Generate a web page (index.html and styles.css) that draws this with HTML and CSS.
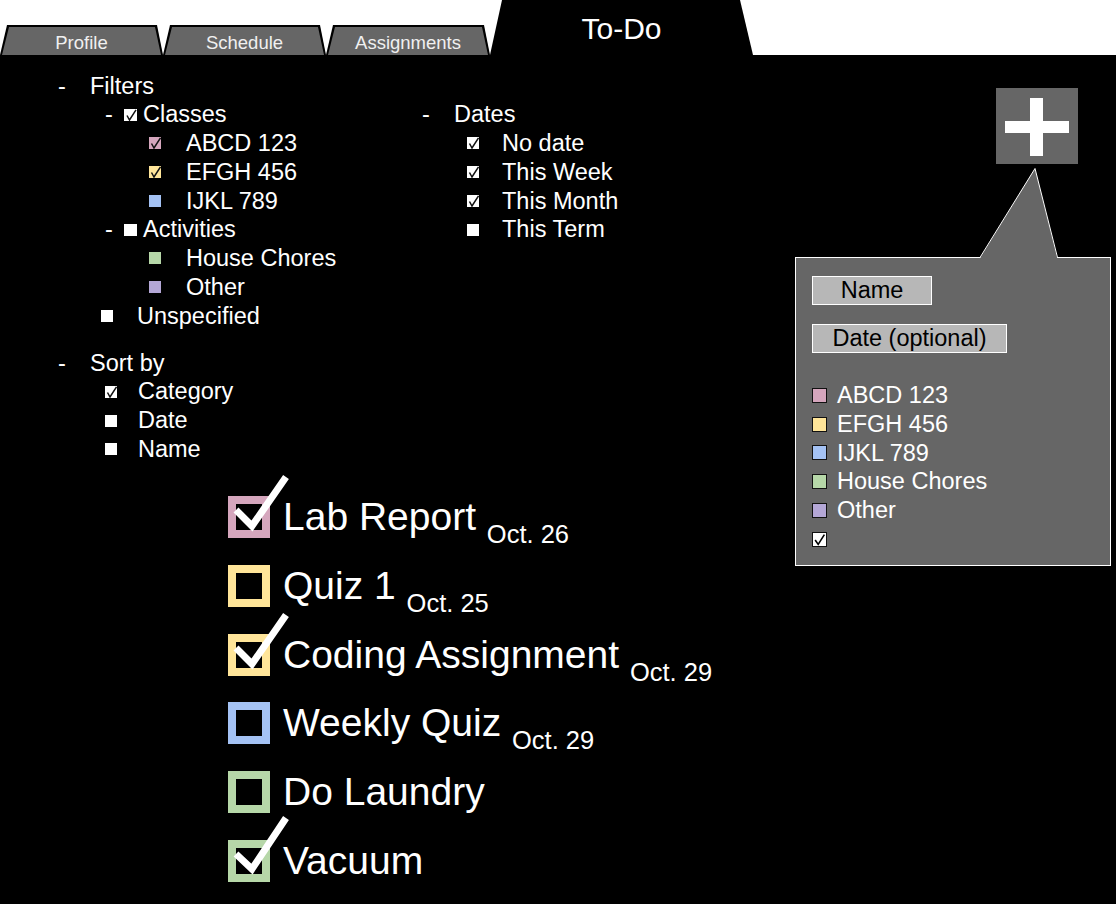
FILE: index.html
```html
<!DOCTYPE html>
<html lang="en">
<head>
<meta charset="utf-8">
<title>To-Do</title>
<link rel="stylesheet" href="styles.css">
</head>
<body>
<header class="tabbar">
  <div class="tab"><span>Profile</span></div>
  <div class="tab"><span>Schedule</span></div>
  <div class="tab wide"><span>Assignments</span></div>
  <div class="tab active"><span>To-Do</span></div>
</header>
<main class="page">
  <div class="left">
    <section class="filters">
      <div class="row"><span class="dash">-</span><span>Filters</span></div>
      <div class="cols">
        <div class="col-left">
          <div class="row grp"><span class="dash-s">-</span><span class="cb lg white"><svg viewBox="0 0 12 12"><path d="M2.5 6.5 L5 11 L11.5 0.8"/></svg></span><span>Classes</span></div>
          <div class="row sub"><span class="cb pink"><svg viewBox="0 0 12 12"><path d="M2.5 6.5 L5 11 L11.5 0.8"/></svg></span><span>ABCD 123</span></div>
          <div class="row sub"><span class="cb yellow"><svg viewBox="0 0 12 12"><path d="M2.5 6.5 L5 11 L11.5 0.8"/></svg></span><span>EFGH 456</span></div>
          <div class="row sub"><span class="cb blue"></span><span>IJKL 789</span></div>
          <div class="row grp"><span class="dash-s">-</span><span class="cb lg white"></span><span>Activities</span></div>
          <div class="row sub"><span class="cb green"></span><span>House Chores</span></div>
          <div class="row sub"><span class="cb purple"></span><span>Other</span></div>
          <div class="row unspec"><span class="cb white"></span><span>Unspecified</span></div>
        </div>
        <div class="col-right">
          <div class="row"><span class="dash">-</span><span>Dates</span></div>
          <div class="row date-item"><span class="cb white"><svg viewBox="0 0 12 12"><path d="M2.5 6.5 L5 11 L11.5 0.8"/></svg></span><span>No date</span></div>
          <div class="row date-item"><span class="cb white"><svg viewBox="0 0 12 12"><path d="M2.5 6.5 L5 11 L11.5 0.8"/></svg></span><span>This Week</span></div>
          <div class="row date-item"><span class="cb white"><svg viewBox="0 0 12 12"><path d="M2.5 6.5 L5 11 L11.5 0.8"/></svg></span><span>This Month</span></div>
          <div class="row date-item"><span class="cb white"></span><span>This Term</span></div>
        </div>
      </div>
      <div class="row sort-head"><span class="dash">-</span><span>Sort by</span></div>
      <div class="row sort-item"><span class="cb white"><svg viewBox="0 0 12 12"><path d="M2.5 6.5 L5 11 L11.5 0.8"/></svg></span><span>Category</span></div>
      <div class="row sort-item"><span class="cb white"></span><span>Date</span></div>
      <div class="row sort-item"><span class="cb white"></span><span>Name</span></div>
    </section>

    <ul class="todos">
      <li class="todo">
        <span class="box b-pink"><svg class="tick" width="42" height="42" viewBox="0 0 42 42"><polyline points="8,14 24,30 58,-19"/></svg></span>
        <span class="title">Lab Report <span class="due">Oct. 26</span></span>
      </li>
      <li class="todo">
        <span class="box b-yellow"></span>
        <span class="title">Quiz 1 <span class="due">Oct. 25</span></span>
      </li>
      <li class="todo">
        <span class="box b-yellow"><svg class="tick" width="42" height="42" viewBox="0 0 42 42"><polyline points="8,14 24,30 58,-19"/></svg></span>
        <span class="title">Coding Assignment <span class="due">Oct. 29</span></span>
      </li>
      <li class="todo">
        <span class="box b-blue"></span>
        <span class="title">Weekly Quiz <span class="due">Oct. 29</span></span>
      </li>
      <li class="todo">
        <span class="box b-green"></span>
        <span class="title">Do Laundry</span>
      </li>
      <li class="todo">
        <span class="box b-green"><svg class="tick" width="42" height="42" viewBox="0 0 42 42"><polyline points="8,14 24,29 58,-22"/></svg></span>
        <span class="title">Vacuum</span>
      </li>
    </ul>
  </div>

  <aside class="add">
    <button class="add-btn" type="button" aria-label="Add">
      <svg width="82" height="76" viewBox="0 0 82 76"><rect x="9" y="33" width="64" height="12" fill="#fff"/><rect x="34" y="10" width="13" height="58" fill="#fff"/></svg>
    </button>
    <div class="popup">
      <svg class="pointer" width="78" height="92" viewBox="0 0 78 92"><polygon points="0.5,92 0.5,89.5 55,0.5 77,89.5 77,92" fill="#666"/><polyline points="0,89.5 55,0.5 77.5,89.5" fill="none" stroke="#fff" stroke-width="1"/></svg>
      <div class="field name">Name</div>
      <div class="field date">Date (optional)</div>
      <div class="cats">
        <div class="cat"><span class="pcb pink"></span><span>ABCD 123</span></div>
        <div class="cat"><span class="pcb yellow"></span><span>EFGH 456</span></div>
        <div class="cat"><span class="pcb blue"></span><span>IJKL 789</span></div>
        <div class="cat"><span class="pcb green"></span><span>House Chores</span></div>
        <div class="cat"><span class="pcb purple"></span><span>Other</span></div>
        <div class="cat"><span class="pcb white"><svg viewBox="0 0 12 12"><path d="M2 6.5 L4.8 10.5 L10.5 1.5"/></svg></span></div>
      </div>
    </div>
  </aside>
</main>
</body>
</html>
```

FILE: styles.css
```css
html, body {
  margin: 0;
  padding: 0;
  background: #000;
  color: #fff;
  font-family: "Liberation Sans", Arial, sans-serif;
}

body {
  width: 1116px;
  height: 904px;
  overflow: hidden;
}

/* ---------- tabs ---------- */
.tabbar {
  height: 55px;
  background: #fff;
  display: flex;
  align-items: flex-end;
}

.tab {
  position: relative;
  width: 163px;
  height: 30px;
  flex: none;
  background: #000;
  clip-path: polygon(7px 0, calc(100% - 6px) 0, 100% 100%, 0 100%);
  display: flex;
  align-items: center;
  justify-content: center;
  font-size: 18.5px;
  color: #f0f0f0;
}

.tab::before {
  content: "";
  position: absolute;
  inset: 0;
  background: #666;
  clip-path: polygon(9px 2px, calc(100% - 8px) 2px, calc(100% - 2px) 100%, 2px 100%);
}

.tab span {
  position: relative;
  padding-top: 5px;
}

.tab.wide {
  width: 164px;
}

.tab.active {
  width: 263px;
  height: 55px;
  clip-path: polygon(12px 0, 250px 0, 100% 100%, 0 100%);
  font-size: 30px;
  color: #fff;
}

.tab.active::before {
  display: none;
}

.tab.active span {
  padding-top: 3px;
}

/* ---------- page ---------- */
.page {
  display: flex;
  height: 849px;
}

.left {
  flex: 1;
}

/* ---------- filters ---------- */
.filters {
  padding: 16.5px 0 0 58px;
  font-size: 23.5px;
  line-height: 28.75px;
}

.row {
  display: flex;
  align-items: center;
  height: 28.75px;
  white-space: nowrap;
}

.dash {
  width: 32px;
  flex: none;
}

.dash-s {
  width: 19px;
  flex: none;
}

.cols {
  display: flex;
}

.col-left {
  width: 364px;
  flex: none;
}

.cb {
  width: 12px;
  height: 12px;
  flex: none;
  display: block;
}

.cb.lg {
  width: 13px;
}

.cb svg {
  display: block;
  width: 100%;
  height: 100%;
}

.cb path {
  fill: none;
  stroke: #111;
  stroke-width: 1.5;
}

.grp {
  margin-left: 47px;
}

.grp .cb {
  margin-right: 6px;
}

.sub {
  margin-left: 91px;
}

.sub .cb {
  margin-right: 25px;
}

.unspec {
  margin-left: 43px;
}

.unspec .cb {
  margin-right: 24px;
}

.date-item {
  margin-left: 45px;
}

.date-item .cb {
  margin-right: 23px;
}

.sort-head {
  margin-top: 18.4px;
}

.sort-item {
  margin-left: 47px;
}

.sort-item .cb {
  margin-right: 21px;
}

.white { background: #fff; }
.pink { background: #d5a6bd; }
.yellow { background: #ffe599; }
.blue { background: #a4c2f4; }
.green { background: #b6d7a8; }
.purple { background: #b4a7d6; }

/* ---------- todo list ---------- */
.todos {
  list-style: none;
  margin: 32.4px 0 0 228px;
  padding: 0;
}

.todo {
  display: flex;
  align-items: flex-start;
  height: 68.8px;
  font-size: 39px;
  line-height: 42px;
  white-space: nowrap;
}

.box {
  position: relative;
  width: 42px;
  height: 42px;
  box-sizing: border-box;
  border: 8px solid;
  background: #000;
  flex: none;
  margin-right: 13px;
}

.b-pink { border-color: #d5a6bd; }
.b-yellow { border-color: #ffe599; }
.b-blue { border-color: #a4c2f4; }
.b-green { border-color: #b6d7a8; }

.tick {
  position: absolute;
  left: -8px;
  top: -8px;
  overflow: visible;
}

.tick polyline {
  fill: none;
  stroke: #fff;
  stroke-width: 7;
  stroke-linejoin: miter;
  stroke-linecap: butt;
}

.due {
  font-size: 25.5px;
  line-height: 1;
  vertical-align: -13px;
}

/* ---------- add panel ---------- */
.add {
  width: 316px;
  flex: none;
  margin-right: 5px;
  padding-top: 33px;
  display: flex;
  flex-direction: column;
  align-items: flex-end;
}

.add-btn {
  width: 82px;
  height: 76px;
  padding: 0;
  border: none;
  background: #666;
  margin-right: 33px;
  display: block;
}

.add-btn svg {
  display: block;
}

.popup {
  position: relative;
  align-self: stretch;
  height: 309px;
  box-sizing: border-box;
  margin-top: 93px;
  border: 1px solid #fff;
  background: #666;
  padding: 18px 16px 0;
  font-size: 23.5px;
}

.pointer {
  position: absolute;
  left: 184px;
  top: -90px;
}

.field {
  box-sizing: border-box;
  height: 29px;
  border: 1px solid #fff;
  background: #b7b7b7;
  color: #000;
  text-align: center;
  line-height: 27px;
  white-space: nowrap;
}

.field.name {
  width: 120px;
}

.field.date {
  width: 195px;
  margin-top: 19px;
}

.cats {
  margin-top: 28px;
  line-height: 28.75px;
}

.cat {
  display: flex;
  align-items: center;
  height: 28.75px;
  gap: 10px;
  white-space: nowrap;
}

.pcb {
  width: 15px;
  height: 15px;
  box-sizing: border-box;
  border: 1.5px solid #111;
  flex: none;
  display: block;
}

.pcb svg {
  display: block;
  width: 100%;
  height: 100%;
}

.pcb path {
  fill: none;
  stroke: #000;
  stroke-width: 1.5;
}
```
